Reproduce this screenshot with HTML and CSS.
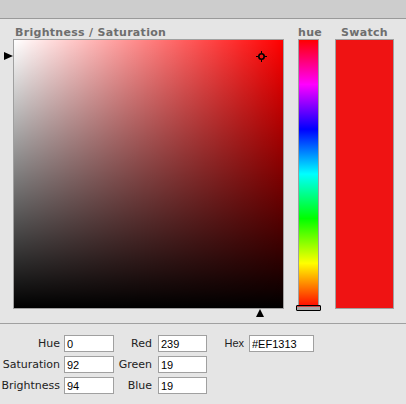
FILE: index.html
```html
<!DOCTYPE html>
<html>
<head>
<meta charset="utf-8">
<link rel="stylesheet" href="styles.css">
</head>
<body>
<div class="topbar"></div>
<div class="picker">
  <div class="col sbcol">
    <div class="label sblabel">Brightness / Saturation</div>
    <div class="sb">
      <div class="sb-white"></div>
      <div class="sb-black"></div>
      <svg class="cross" width="11" height="11" viewBox="0 0 11 11">
        <circle cx="5.5" cy="5.5" r="2.7" fill="none" stroke="#000" stroke-width="1.6"/>
        <rect x="5" y="0" width="1" height="2" fill="#000"/>
        <rect x="5" y="9" width="1" height="2" fill="#000"/>
        <rect x="0" y="5" width="2" height="1" fill="#000"/>
        <rect x="9" y="5" width="2" height="1" fill="#000"/>
      </svg>
    </div>
    <div class="arrow-left"></div>
    <div class="arrow-up"></div>
  </div>
  <div class="col huecol">
    <div class="label center">hue</div>
    <div class="hue"></div>
    <div class="thumb"></div>
  </div>
  <div class="col swcol">
    <div class="label center">Swatch</div>
    <div class="swatch"></div>
  </div>
</div>
<div class="divider"></div>
<div class="form">
  <label class="lab">Hue</label><input class="inp" value="0">
  <label class="lab lab2">Red</label><input class="inp" value="239">
  <label class="lab lab3 hex">Hex</label><input class="inp hexinp" value="#EF1313">
  <label class="lab">Saturation</label><input class="inp" value="92">
  <label class="lab lab2">Green</label><input class="inp" value="19">
  <span></span><span></span>
  <label class="lab">Brightness</label><input class="inp" value="94">
  <label class="lab lab2">Blue</label><input class="inp" value="19">
  <span></span><span></span>
</div>
</body>
</html>
```
FILE: styles.css
```css
html, body {
  margin: 0;
  padding: 0;
  background: #e5e5e5;
  width: 406px;
  height: 404px;
  overflow: hidden;
}
.topbar {
  height: 18px;
  background: #cdcdcd;
  border-bottom: 1px solid #9a9a9a;
}
.picker {
  display: flex;
  padding-left: 13px;
  height: 304px;
}
.col {
  position: relative;
  display: flex;
  flex-direction: column;
}
.label {
  height: 20px;
  box-sizing: border-box;
  padding-top: 8px;
  font-family: "DejaVu Sans", sans-serif;
  font-weight: bold;
  font-size: 11px;
  line-height: 11px;
  letter-spacing: 0.3px;
  color: #6e6e6e;
  white-space: nowrap;
}
.sblabel { padding-left: 2px; }
.center { text-align: center; }
.sb {
  position: relative;
  width: 269px;
  height: 268px;
  border: 1px solid #a0a0a0;
  background: #ff0000;
}
.sb-white, .sb-black {
  position: absolute;
  inset: 0;
}
.sb-white { background: linear-gradient(to right, #fff, rgba(255,255,255,0)); }
.sb-black { background: linear-gradient(to bottom, rgba(0,0,0,0), #000); }
.cross {
  position: absolute;
  left: 242px;
  top: 11px;
}
.arrow-left {
  position: absolute;
  left: -9px;
  top: 33px;
  width: 0; height: 0;
  border-top: 4.5px solid transparent;
  border-bottom: 4.5px solid transparent;
  border-left: 9px solid #000;
}
.arrow-up {
  position: absolute;
  left: 243px;
  top: 290px;
  width: 0; height: 0;
  border-left: 4.5px solid transparent;
  border-right: 4.5px solid transparent;
  border-bottom: 8px solid #000;
}
.huecol { margin-left: 14px; width: 21px; }
.hue {
  width: 19px;
  height: 268px;
  border: 1px solid #a0a0a0;
  background: linear-gradient(to bottom, #f00 0%, #f0f 16.6%, #00f 33.3%, #0ff 50%, #0f0 66.6%, #ff0 83.3%, #f00 100%);
}
.thumb {
  position: absolute;
  left: -2px;
  top: 286px;
  width: 23px;
  height: 4px;
  border: 1px solid #000;
  border-radius: 1px;
  background: #a8a8a8;
  box-shadow: inset 0 1px 0 #d04040;
}
.swcol { margin-left: 16px; width: 59px; }
.swatch {
  width: 57px;
  height: 268px;
  border: 1px solid #a0a0a0;
  background: #ef1313;
}
.divider {
  height: 0;
  border-top: 1px solid #a0a0a0;
}
.form {
  display: grid;
  grid-template-columns: 64px 50px 44px 49px 42px 65px;
  grid-auto-rows: 17px;
  row-gap: 4px;
  padding-top: 11px;
}
.lab {
  font-family: "DejaVu Sans", sans-serif;
  font-size: 11px;
  line-height: 17px;
  color: #222;
  text-align: right;
  padding-right: 4px;
  white-space: nowrap;
}
.lab2 { padding-right: 6px; }
.lab3 { padding-right: 5px; }
.hex {
  font-family: "Liberation Sans", sans-serif;
}
.inp {
  box-sizing: border-box;
  width: 100%;
  height: 17px;
  margin: 0;
  border: 1px solid #a0a0a0;
  background: #fff;
  padding: 0 0 0 2px;
  font-family: "Liberation Sans", sans-serif;
  font-size: 11px;
  color: #000;
  outline: none;
}
```
